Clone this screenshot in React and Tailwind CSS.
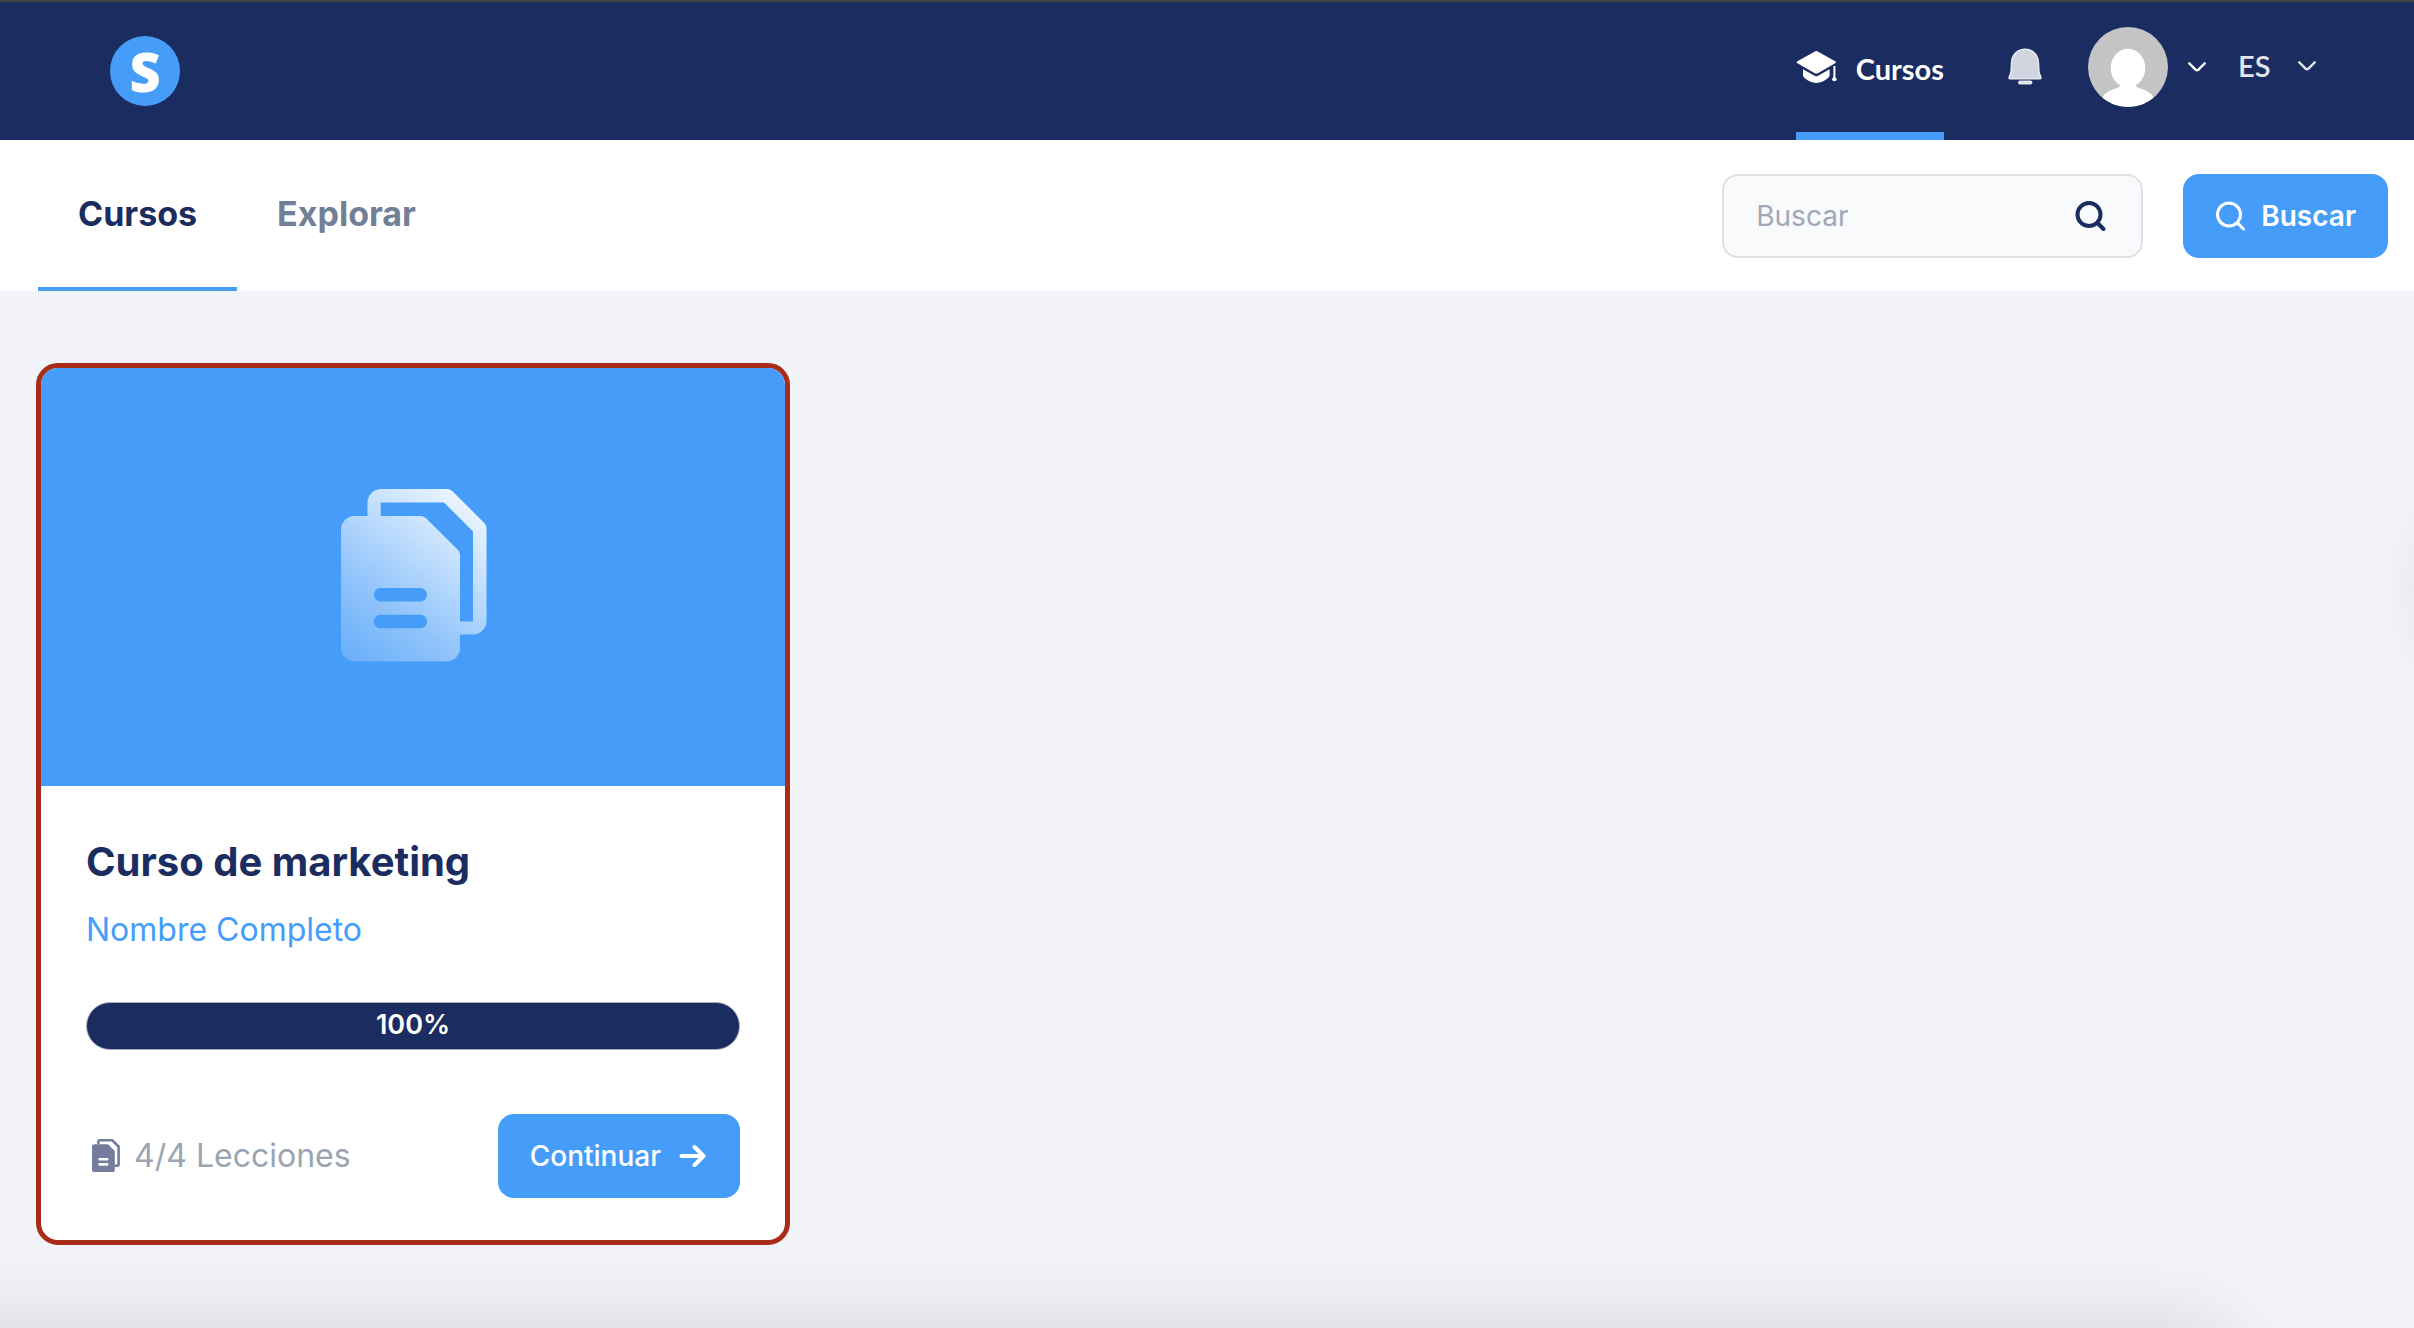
import React from "react";

function GraduationCap() {
  return (
    <svg width="42" height="34" viewBox="0 0 42 34" fill="#fff" aria-hidden="true">
      <path d="M18.8 1.4Q20.3 .6 21.8 1.4L39.6 11.6Q40.4 12.3 39.6 13L21.8 23.2Q20.3 24 18.8 23.2L1 13Q.2 12.3 1 11.6Z" />
      <path d="M7 19.2L18.6 25.8Q20.3 26.8 22 25.8L33.6 19.2V25.6Q33.4 27 32 28Q27 32.6 20.3 33Q13.6 32.6 8.6 28Q7.2 27 7 25.6Z" />
      <path d="M38.4 16V29" stroke="#fff" strokeWidth="2" fill="none" />
      <ellipse cx="38.4" cy="29.2" rx="2.3" ry="2" />
    </svg>
  );
}

function Bell() {
  return (
    <svg width="34" height="38" viewBox="0 0 34 38" aria-hidden="true">
      <path
        d="M17 1.2C9.6 1.2 4.2 6.4 3.6 13.6L3 23.6C2.7 26.4 1.2 27.6 1 30Q1 30.8 2.4 30.8H31.6Q33 30.8 33 30C32.8 27.6 31.3 26.4 31 23.6L30.4 13.6C29.8 6.4 24.4 1.2 17 1.2Z"
        fill="#d1d5e0"
        stroke="#e9eaf0"
        strokeWidth="1.4"
      />
      <rect x="10" y="32.6" width="14.4" height="4" rx="2" fill="#e4e6ed" />
    </svg>
  );
}

function Avatar() {
  return (
    <svg width="80" height="80" viewBox="0 0 80 80" aria-hidden="true">
      <defs>
        <clipPath id="avatar-clip">
          <circle cx="40" cy="40" r="40" />
        </clipPath>
      </defs>
      <g clipPath="url(#avatar-clip)">
        <rect width="80" height="80" fill="#c4c4c4" />
        <ellipse cx="40" cy="41" rx="17.3" ry="19.3" fill="#fff" />
        <path d="M32 56Q33.500 60.500 26 62Q14 65.500 12 76V80H68V76Q66 65.500 54 62Q46.500 60.500 48 56Z" fill="#fff" />
      </g>
    </svg>
  );
}

function Chevron({ className }) {
  return (
    <svg className={className} width="18" height="10" viewBox="0 0 18 10" fill="none" stroke="currentColor" strokeWidth="2.400" strokeLinecap="round" strokeLinejoin="round" aria-hidden="true">
      <path d="M1.300 1.300L7.800 7.800Q9 8.800 10.200 7.800L16.700 1.300" />
    </svg>
  );
}

function SearchIcon({ className, thickness }) {
  return (
    <svg className={className} width="32" height="32" viewBox="0 0 32 32" fill="none" stroke="currentColor" strokeWidth={thickness} strokeLinecap="round" aria-hidden="true">
      <circle cx="14" cy="14.500" r="11.500" />
      <path d="M22.500 23L28.500 29" />
    </svg>
  );
}

function Documents({ className, fill, children }) {
  return (
    <svg className={className} viewBox="0 0 146 173" fill={fill} aria-hidden="true">
      {children}
      <path d="M26.500 27.500V13.500A13.500 13.500 0 0 1 40 0H106Q109 0 111.500 2.200L143.500 34.200Q145.500 36.500 145.500 40V132A13.500 13.500 0 0 1 132 145.500H119V132.500H132V42.500L103 13.500H39.700V27.500Z" />
      <path
        fillRule="evenodd"
        d="M13.500 27H79.500Q82.500 27 84.800 29L117 61Q119 63 119 66.500V159A13.500 13.500 0 0 1 105.500 172.500H13.500A13.500 13.500 0 0 1 0 159V40.500A13.500 13.500 0 0 1 13.500 27ZM39.500 99A6.700 6.700 0 0 0 39.500 112.500H79.300A6.700 6.700 0 0 0 79.300 99ZM39.500 125.700A6.700 6.700 0 0 0 39.500 139.200H79.300A6.700 6.700 0 0 0 79.300 125.700Z"
      />
    </svg>
  );
}

function Arrow() {
  return (
    <svg width="27" height="24" viewBox="0 0 27 24" fill="none" stroke="currentColor" strokeWidth="4" strokeLinecap="round" strokeLinejoin="round" aria-hidden="true">
      <path d="M2.500 12H24M15.500 3L24.500 12L15.500 21" />
    </svg>
  );
}

function Header() {
  return (
    <header className="flex h-[140px] justify-between border-t-2 border-[#444] bg-[#1b2d60] pr-[98px] pl-[110px]">
      <a href="#" aria-label="Inicio" className="flex size-[70px] items-center justify-center self-center rounded-full bg-[#469df9] font-['Open_Sans',sans-serif] text-[54px] leading-none font-extrabold text-white">
        S
      </a>
      <div className="flex font-['Lato',sans-serif] text-[29px] text-white">
        <a href="#" aria-current="page" className="flex items-center gap-4.5 border-b-8 border-[#469df9] font-bold">
          <GraduationCap />
          <span className="pt-1">Cursos</span>
        </a>
        <div className="flex items-center pb-2">
          <button type="button" aria-label="Notificaciones" className="ml-16">
            <Bell />
          </button>
          <button type="button" aria-label="Cuenta" className="ml-[46px] flex items-center gap-5">
            <Avatar />
            <Chevron className="text-white" />
          </button>
          <div className="relative ml-8 flex items-center pb-0.5 text-[#e4e6ee]">
            <select aria-label="Idioma" className="w-[78px] appearance-none bg-transparent font-semibold">
              <option>ES</option>
            </select>
            <Chevron className="pointer-events-none absolute right-0" />
          </div>
        </div>
      </div>
    </header>
  );
}

function Toolbar() {
  return (
    <div className="flex h-[151px] justify-between bg-white pr-[26px] pl-[38px]">
      <nav className="flex text-[34px] font-bold">
        <a href="#" aria-current="page" className="flex items-center border-b-4 border-[#469df9] px-10 text-[#1b2d60]">
          Cursos
        </a>
        <a href="#" className="flex items-center border-b-4 border-transparent px-10 text-[#718096]">
          Explorar
        </a>
      </nav>
      <form className="flex items-center gap-10 text-[28px]" onSubmit={(e) => e.preventDefault()}>
        <label className="flex h-[84px] w-[421px] items-center rounded-2xl border-2 border-[#dde1e7] bg-[#f9fafc] pr-8.5 pl-8">
          <input type="text" aria-label="Buscar" placeholder="Buscar" className="min-w-0 flex-1 bg-transparent outline-none placeholder:text-[#9fa7b8]" />
          <SearchIcon className="text-[#1b2d60]" thickness={4} />
        </label>
        <button type="submit" className="flex h-[84px] items-center gap-3.5 rounded-2xl bg-[#469df9] px-8 font-semibold text-white">
          <SearchIcon thickness={3} />
          Buscar
        </button>
      </form>
    </div>
  );
}

function CourseCard() {
  return (
    <article className="overflow-hidden rounded-[22px] border-[5px] border-[#a82c18] bg-white">
      <div className="flex h-[418px] items-center justify-center bg-[#469df9] pb-1 pl-0.5">
        <Documents className="w-[146px]" fill="url(#doc-fade)">
          <defs>
            <linearGradient id="doc-fade" gradientUnits="userSpaceOnUse" x1="10" y1="180" x2="140" y2="10">
              <stop offset="0" stopColor="#66adfa" />
              <stop offset=".35" stopColor="#92c4fb" />
              <stop offset=".7" stopColor="#c6e1fd" />
              <stop offset="1" stopColor="#f2f9ff" />
            </linearGradient>
          </defs>
        </Documents>
      </div>
      <div className="px-[45px] pt-12 pb-[42px]">
        <h2 className="text-[40px] leading-14 font-bold text-[#1b2d60]">Curso de marketing</h2>
        <p className="mt-4 text-[32px] leading-12 text-[#469df9]">Nombre Completo</p>
        <div role="progressbar" aria-label="Progreso" aria-valuenow={100} aria-valuemin={0} aria-valuemax={100} className="mt-12 flex h-12 items-center justify-center rounded-full border border-[#a7aec2] bg-[#1b2d60] pb-0.5 text-[27px] leading-10 font-semibold text-white">
          100%
        </div>
        <div className="mt-16 flex items-center justify-between">
          <p className="flex items-center gap-3.5 pl-1.5 text-[32px] text-[#9aa5b1]">
            <Documents className="w-7" fill="#737c9d" />
            4/4 Lecciones
          </p>
          <button type="button" className="flex h-[84px] items-center gap-4.5 rounded-2xl bg-[#469df9] pr-8.5 pl-8 text-[28px] font-medium text-white">
            Continuar
            <Arrow />
          </button>
        </div>
      </div>
    </article>
  );
}

export default function App() {
  return (
    <div className="relative flex min-h-screen flex-col overflow-hidden bg-[#f3f4f9] font-['Inter',sans-serif]">
      <Header />
      <Toolbar />
      <main className="grid flex-1 grid-cols-3 items-start gap-10 px-9 pt-[72px]">
        <CourseCard />
      </main>
      <div className="pointer-events-none absolute top-[510px] left-full ml-8 h-40 w-40 rounded-full shadow-[0_0_80px_rgba(0,0,0,0.22)]" />
      <div className="pointer-events-none absolute top-full right-[180px] -left-40 h-40 rounded-[40px] shadow-[0_0_90px_rgba(0,0,0,0.14)]" />
    </div>
  );
}
